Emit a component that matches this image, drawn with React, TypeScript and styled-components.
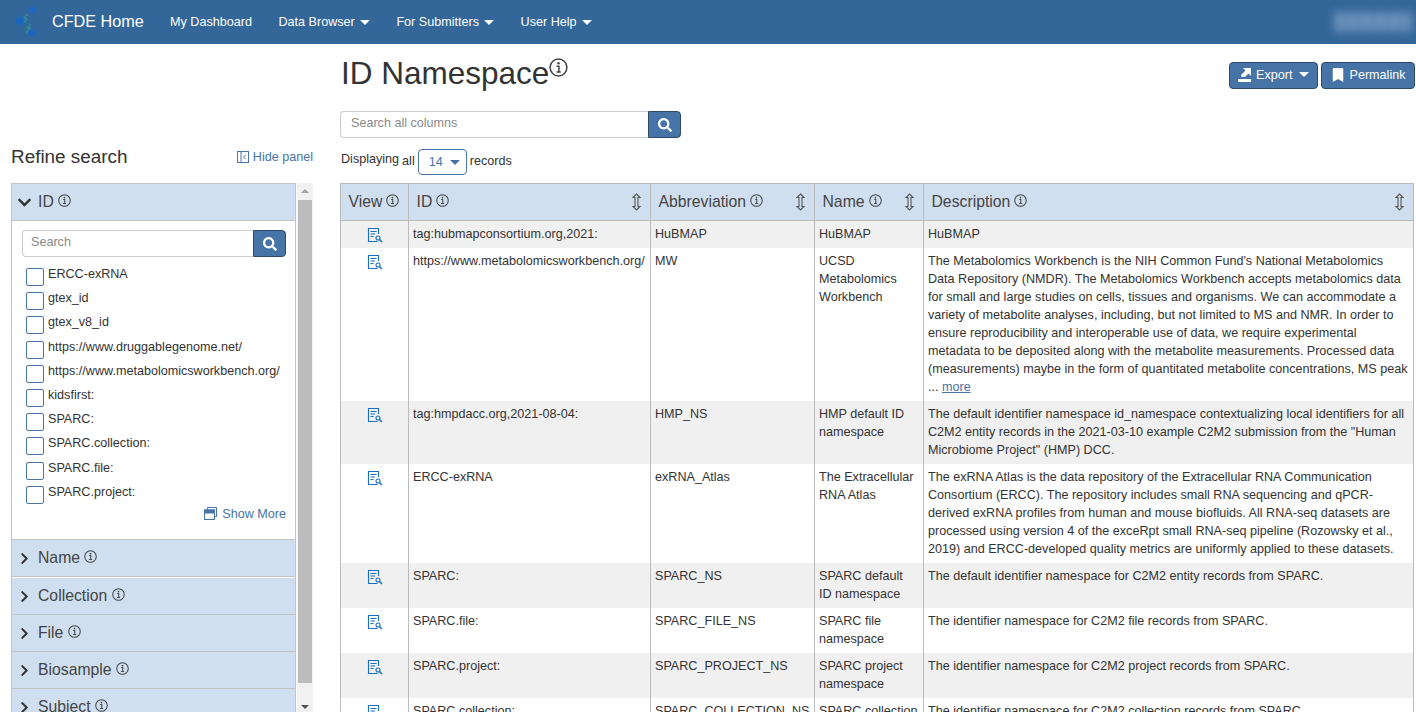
import styled, {createGlobalStyle} from 'styled-components';
import {FaBookmark, FaChevronDown, FaChevronRight, FaSearch} from 'react-icons/fa';

const Global = createGlobalStyle`
  html, body {
    margin: 0;
    height: 712px;
    overflow: hidden;
    background: white;
    font-family: "Liberation Sans", Arial, sans-serif;
    font-size: 12.6px;
    line-height: 18px;
    color: #333;
  }
  * { box-sizing: border-box; }
`;

const Navbar = styled.nav`
  height: 44px;
  background: #336699;
  color: white;
  display: flex;
  align-items: center;
  padding-left: 15px;
`;
const Brand = styled.div`
  display: flex;
  align-items: center;
  font-size: 16.2px;
  width: 155px;
  margin-top: -3px;
  > svg { margin-right: 7px; margin-top: 3px; }
`;
const NavItem = styled.div`
  display: flex;
  align-items: center;
  margin-right: 26.6px;
  &:after {
    content: ${p => p.$caret ? '""' : 'none'};
    margin-left: 5px;
    border-top: 5px solid white;
    border-left: 5px solid transparent;
    border-right: 5px solid transparent;
  }
`;
const BlurredName = styled.div`
  margin-left: auto;
  margin-right: 4px;
  width: 78px;
  height: 20px;
  background: repeating-linear-gradient(90deg, #6d92ba 0 9px, #5a84b0 9px 14px);
  filter: blur(4px);
`;

const Main = styled.main`
  display: flex;
  height: 668px;
  overflow: hidden;
`;
const Sidebar = styled.aside`
  width: 340px;
  flex-shrink: 0;
  padding: 102px 16px 0 11px;
`;
const SideHead = styled.div`
  display: flex;
  justify-content: space-between;
  align-items: center;
  height: 22px;
  margin-bottom: 15px;
  padding-right: 11px;
`;
const SideTitle = styled.h2`
  margin: 0;
  font-size: 18.9px;
  font-weight: 400;
`;
const HidePanel = styled.a`
  display: flex;
  align-items: center;
  gap: 4px;
  color: #4674a7;
`;
const FacetArea = styled.div`
  display: flex;
  height: 600px;
`;
const Facets = styled.div`
  width: 285px;
  border: 1px solid #c4c4c4;
  border-bottom: 0;
  flex-shrink: 0;
`;
const FacetHead = styled.div`
  height: 36px;
  background: #d0dff0;
  display: flex;
  align-items: center;
  padding-left: ${p => p.$open ? '5px' : '6px'};
  margin-bottom: ${p => p.$gap};
  font-size: 15.75px;
  color: #444;
  box-shadow: 0 1px 0 #c4c4c4;
  > svg:first-child { margin-right: ${p => p.$open ? '6px' : '7px'}; color: #333; }
  > svg:last-child { margin-top: -4px; }
`;
const FacetBody = styled.div`
  padding: 10px 9px 0 10px;
  height: 320px;
  border-bottom: 1px solid #c4c4c4;
`;
const Scrollbar = styled.div`
  width: 16px;
  margin-left: 1px;
  background: #f1f1f1;
  display: flex;
  flex-direction: column;
  align-items: center;
  padding-top: 6px;
`;
const ScrollArrow = styled.div`
  width: 0;
  height: 0;
  border-left: 4px solid transparent;
  border-right: 4px solid transparent;
  border-bottom: 4px solid #a3a3a3;
  margin-bottom: 7px;
`;
const ScrollThumb = styled.div`
  width: 14px;
  height: 483px;
  background: #bcbcbc;
`;
const ScrollArrowDown = styled(ScrollArrow)`
  border-bottom: 0;
  border-top: 4px solid #505050;
  margin: 22px 0 0;
`;
const SearchBox = styled.div`
  display: flex;
  height: 27px;
  width: ${p => p.$width};
`;
const SearchInput = styled.div`
  flex: 1;
  border: 1px solid #ccc;
  border-right: 0;
  border-radius: 4px 0 0 4px;
  color: #8a8a8a;
  padding: 2px ${p => p.$inset};
`;
const SearchButton = styled.div`
  width: 33px;
  background: #4674a7;
  border: 1px solid #2e4a68;
  border-radius: 0 4px 4px 0;
  color: white;
  display: flex;
  align-items: center;
  justify-content: center;
  font-size: 14px;
`;
const CheckList = styled.div`
  margin-top: 8px;
  padding-left: 4px;
`;
const CheckRow = styled.div`
  display: flex;
  height: 24.2px;
`;
const Check = styled.span`
  width: 18px;
  height: 18px;
  border: 1px solid #4674a7;
  border-radius: 2px;
  margin: 3px 4px 0 0;
  flex-shrink: 0;
`;
const CheckText = styled.span`
  white-space: nowrap;
`;
const ShowMore = styled.div`
  display: flex;
  justify-content: flex-end;
  align-items: center;
  gap: 5px;
  color: #4674a7;
  margin-top: -2px;
`;

const Content = styled.section`
  flex: 1;
  min-width: 0;
  padding-right: 1px;
`;
const TitleRow = styled.div`
  display: flex;
  justify-content: space-between;
  height: 67px;
`;
const Title = styled.h1`
  margin: 7px 0 0 1px;
  font-size: 31.5px;
  line-height: 44px;
  font-weight: 400;
  display: flex;
  > svg { margin: 7px 0 0 0; }
`;
const Actions = styled.div`
  display: flex;
  gap: 3px;
  margin-top: 18px;
  height: 27px;
`;
const ActionButton = styled.div`
  background: #4674a7;
  border: 1px solid #2e4a68;
  border-radius: 4px;
  color: white;
  display: flex;
  align-items: center;
  gap: 5px;
  padding: 0 8.5px 2px;
`;
const Caret = styled.span`
  border-top: 5px solid ${p => p.$color};
  border-left: 5px solid transparent;
  border-right: 5px solid transparent;
  margin-left: ${p => p.$gap};
`;
const CountRow = styled.div`
  display: flex;
  align-items: center;
  margin-top: 11px;
  padding-left: 1px;
  height: 26px;
  gap: 3px;
`;
const CountLabel = styled.span`
  margin-top: ${p => p.$offset};
`;
const CountSelect = styled.div`
  width: 49px;
  height: 26px;
  border: 1px solid #4674a7;
  border-radius: 4px;
  color: #4674a7;
  display: flex;
  align-items: center;
  padding-left: 10px;
`;
const Table = styled.table`
  border-collapse: collapse;
  table-layout: fixed;
  width: 1073px;
  margin-top: 8px;
`;
const Th = styled.th`
  height: 37px;
  background: #d0dff0;
  border: 1px solid #bbb;
  font-weight: 400;
  font-size: 15.75px;
  text-align: left;
  color: #444;
  padding: 0 8px 0 7.5px;
`;
const ThInner = styled.div`
  display: flex;
  align-items: center;
  gap: 4px;
  > svg:nth-of-type(1) { margin-top: -3px; }
  > svg:nth-of-type(2) { margin: 0 0 0 auto; }
`;
const Tr = styled.tr`
  background: ${p => p.$shade ? '#f0f0f0' : 'white'};
`;
const Td = styled.td`
  vertical-align: top;
  border-left: 1px solid #bbb;
  border-right: 1px solid #bbb;
  padding: 4px 5px 5px 4px;
  color: #333;
`;
const ViewCell = styled(Td)`
  padding: 6px 4px 0;
  > svg { display: block; margin: 0 auto; }
`;
const More = styled.a`
  color: #4674a7;
  text-decoration: underline;
`;

const Info = ({size = 13}: {size?: number}) => (
  <svg width={size} height={size} viewBox="0 0 14 14" fill="none" stroke="#444" strokeWidth="1.1">
    <circle cx="7" cy="7" r="6.2" />
    <circle cx="7" cy="3.9" r=".9" fill="#444" stroke="none" />
    <path d="M5.6 6h1.7v4M5.5 10.3h3.2" />
  </svg>
);

const Logo = () => (
  <svg width="30" height="36" viewBox="0 0 30 36">
    <path d="M13 10l-4 4 3 1-4 4M16 20l-4 4 3 0-4 5" fill="none" stroke="#2f8c94" strokeWidth="1.4" />
    <circle cx="17" cy="6" r="3.500" fill="#1c66c4" />
    <circle cx="5" cy="17" r="4" fill="#1c66c4" />
    <circle cx="17" cy="29" r="3.500" fill="#1c66c4" />
  </svg>
);

const SortIcon = () => (
  <svg width="11" height="18" viewBox="0 0 11 18" fill="#d0dff0" stroke="#555" strokeWidth="1.1">
    <path d="M5.500 1L9 4.500H7V13.500H9L5.500 17L2 13.500H4V4.500H2Z" />
  </svg>
);

const ViewIcon = () => (
  <svg width="16" height="16" viewBox="0 0 16 16" fill="none" stroke="#1b6fc4" strokeWidth="1.1">
    <path d="M10.500 14.500H1.500V1.500H11.500V7" />
    <path d="M3.500 4.500H9.500M3.500 7H8M3.500 9.500H6.500" />
    <circle cx="11" cy="11" r="2" />
    <path d="M12.500 12.500L15 15" strokeWidth="1.500" />
  </svg>
);

const ExportIcon = () => (
  <svg width="13" height="15" viewBox="0 0 13 15" fill="white">
    <rect x="0" y="12" width="13" height="3" />
    <path d="M5 1h8v8l-2.500-2.500L7 10H3.500L3 8l4.500-4.500z" />
  </svg>
);

const PanelIcon = () => (
  <svg width="12" height="12" viewBox="0 0 12 12" fill="none" stroke="#4674a7">
    <rect x=".5" y=".5" width="11" height="11" />
    <path d="M4 .5v11M8.500 4L6.500 6l2 2" />
  </svg>
);

const ShowMoreIcon = () => (
  <svg width="13" height="13" viewBox="0 0 13 13" fill="none" stroke="#4674a7">
    <path d="M3.500 2.500V.5h9v9h-2" />
    <rect x=".5" y="3" width="10" height="9.500" />
    <rect x=".5" y="3" width="10" height="3" fill="#4674a7" />
  </svg>
);

const checks = ['ERCC-exRNA', 'gtex_id', 'gtex_v8_id', 'https://www.druggablegenome.net/', 'https://www.metabolomicsworkbench.org/', 'kidsfirst:', 'SPARC:', 'SPARC.collection:', 'SPARC.file:', 'SPARC.project:'];
const closedFacets = ['Name', 'Collection', 'File', 'Biosample', 'Subject'];
const columns = [
  {name: 'ID', width: 242},
  {name: 'Abbreviation', width: 164},
  {name: 'Name', width: 109},
  {name: 'Description', width: 490},
];
const rows = [
  {id: 'tag:hubmapconsortium.org,2021:', abbr: 'HuBMAP', name: 'HuBMAP', desc: 'HuBMAP'},
  {id: 'https://www.metabolomicsworkbench.org/', abbr: 'MW', name: 'UCSD Metabolomics Workbench', more: true,
    desc: "The Metabolomics Workbench is the NIH Common Fund's National Metabolomics Data Repository (NMDR). The Metabolomics Workbench accepts metabolomics data for small and large studies on cells, tissues and organisms. We can accommodate a variety of metabolite analyses, including, but not limited to MS and NMR. In order to ensure reproducibility and interoperable use of data, we require experimental metadata to be deposited along with the metabolite measurements. Processed data (measurements) maybe in the form of quantitated metabolite concentrations, MS peak ... "},
  {id: 'tag:hmpdacc.org,2021-08-04:', abbr: 'HMP_NS', name: 'HMP default ID namespace',
    desc: 'The default identifier namespace id_namespace contextualizing local identifiers for all C2M2 entity records in the 2021-03-10 example C2M2 submission from the "Human Microbiome Project" (HMP) DCC.'},
  {id: 'ERCC-exRNA', abbr: 'exRNA_Atlas', name: 'The Extracellular RNA Atlas',
    desc: 'The exRNA Atlas is the data repository of the Extracellular RNA Communication Consortium (ERCC). The repository includes small RNA sequencing and qPCR-derived exRNA profiles from human and mouse biofluids. All RNA-seq datasets are processed using version 4 of the exceRpt small RNA-seq pipeline (Rozowsky et al., 2019) and ERCC-developed quality metrics are uniformly applied to these datasets.'},
  {id: 'SPARC:', abbr: 'SPARC_NS', name: 'SPARC default ID namespace', desc: 'The default identifier namespace for C2M2 entity records from SPARC.'},
  {id: 'SPARC.file:', abbr: 'SPARC_FILE_NS', name: 'SPARC file namespace', desc: 'The identifier namespace for C2M2 file records from SPARC.'},
  {id: 'SPARC.project:', abbr: 'SPARC_PROJECT_NS', name: 'SPARC project namespace', desc: 'The identifier namespace for C2M2 project records from SPARC.'},
  {id: 'SPARC.collection:', abbr: 'SPARC_COLLECTION_NS', name: 'SPARC collection namespace', desc: 'The identifier namespace for C2M2 collection records from SPARC.'},
];

const App = () => {
  return (
    <>
      <Global />
      <Navbar>
        <Brand><Logo />CFDE Home</Brand>
        <NavItem>My Dashboard</NavItem>
        <NavItem $caret>Data Browser</NavItem>
        <NavItem $caret>For Submitters</NavItem>
        <NavItem $caret>User Help</NavItem>
        <BlurredName />
      </Navbar>
      <Main>
        <Sidebar>
          <SideHead>
            <SideTitle>Refine search</SideTitle>
            <HidePanel><PanelIcon />Hide panel</HidePanel>
          </SideHead>
          <FacetArea>
            <Facets>
              <FacetHead $open $gap="0">
                <FaChevronDown size={15} />ID&nbsp;<Info />
              </FacetHead>
              <FacetBody>
                <SearchBox $width="264px">
                  <SearchInput $inset="8px">Search</SearchInput>
                  <SearchButton><FaSearch /></SearchButton>
                </SearchBox>
                <CheckList>
                  {checks.map(c => (
                    <CheckRow key={c}>
                      <Check />
                      <CheckText>{c}</CheckText>
                    </CheckRow>
                  ))}
                </CheckList>
                <ShowMore><ShowMoreIcon />Show More</ShowMore>
              </FacetBody>
              {closedFacets.map((f, i) => (
                <FacetHead key={f} $gap={i === 0 ? '2px' : '1px'}>
                  <FaChevronRight size={13} />{f}&nbsp;<Info />
                </FacetHead>
              ))}
            </Facets>
            <Scrollbar>
              <ScrollArrow />
              <ScrollThumb />
              <ScrollArrowDown />
            </Scrollbar>
          </FacetArea>
        </Sidebar>
        <Content>
          <TitleRow>
            <Title>ID Namespace<Info size={19} /></Title>
            <Actions>
              <ActionButton><ExportIcon />Export<Caret $color="white" $gap="1px" /></ActionButton>
              <ActionButton><FaBookmark size={14} />Permalink</ActionButton>
            </Actions>
          </TitleRow>
          <SearchBox $width="341px">
            <SearchInput $inset="10px">Search all columns</SearchInput>
            <SearchButton><FaSearch /></SearchButton>
          </SearchBox>
          <CountRow>
            <CountLabel $offset="-6px">Displaying</CountLabel>
            <CountLabel $offset="-3px">all</CountLabel>
            <CountSelect>14<Caret $color="#4674a7" $gap="7px" /></CountSelect>
            <CountLabel $offset="-3px">records</CountLabel>
          </CountRow>
          <Table>
            <colgroup>
              <col style={{width: 68}} />
              {columns.map(c => <col key={c.name} style={{width: c.width}} />)}
            </colgroup>
            <thead>
              <tr>
                <Th><ThInner>View <Info /></ThInner></Th>
                {columns.map(c => (
                  <Th key={c.name}><ThInner>{c.name} <Info /><SortIcon /></ThInner></Th>
                ))}
              </tr>
            </thead>
            <tbody>
              {rows.map((r, i) => (
                <Tr key={r.id} $shade={i % 2 === 0}>
                  <ViewCell><ViewIcon /></ViewCell>
                  <Td>{r.id}</Td>
                  <Td>{r.abbr}</Td>
                  <Td>{r.name}</Td>
                  <Td>{r.desc}{r.more && <More>more</More>}</Td>
                </Tr>
              ))}
            </tbody>
          </Table>
        </Content>
      </Main>
    </>
  );
};
export default App;
